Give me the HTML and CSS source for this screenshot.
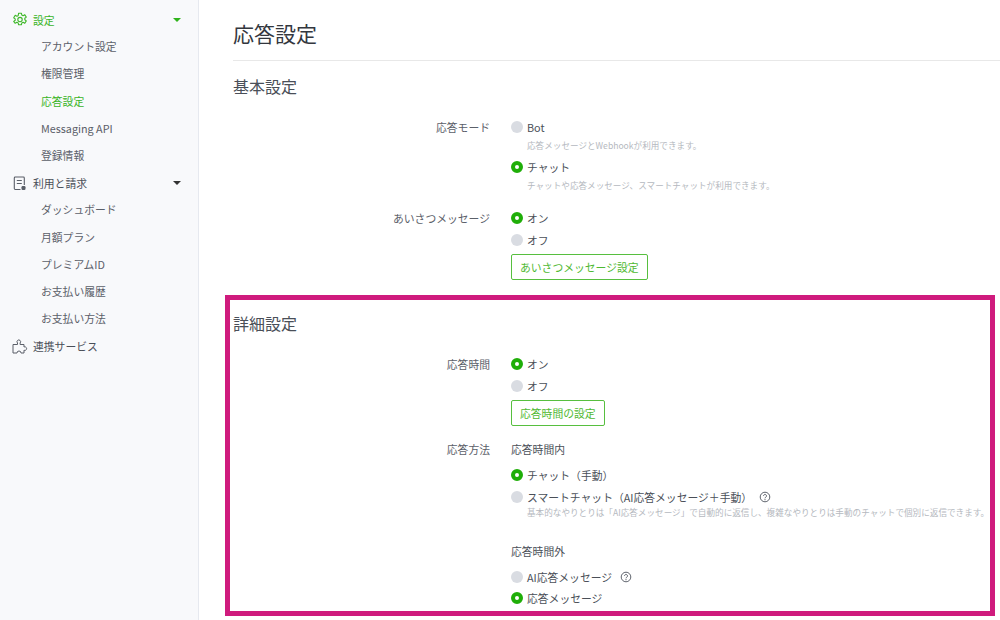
FILE: index.html
```html
<!DOCTYPE html>
<html lang="ja">

<head>
    <meta charset="UTF-8">
    <title>応答設定</title>
    <link rel="stylesheet" href="styles.css">
</head>

<body>
    <svg class="sprite" width="0" height="0">
        <symbol id="help" viewBox="0 0 12 12">
            <circle cx="6" cy="6" r="4.8" fill="none" stroke="#5f646d" stroke-width="1"></circle>
            <path d="M4.500 4.900a1.500 1.500 0 1 1 2.300 1.300c-.5.3-.8.6-.8 1.100" fill="none" stroke="#5f646d" stroke-width="1"></path>
            <circle cx="6" cy="8.700" r=".6" fill="#5f646d"></circle>
        </symbol>
    </svg>

    <div class="sidebar">
        <div class="nav-head active">
            <svg class="nav-icon" viewBox="0 0 16 16">
                <path d="M6.600 1.200h2.800l.4 1.900 1.300.6 1.700-1 1.500 2.400-1.500 1.200v1.400l1.500 1.200-1.500 2.400-1.700-1-1.300.6-.4 1.900H6.600l-.4-1.900-1.300-.6-1.700 1L1.700 9.500l1.500-1.200V6.900L1.700 5.700l1.500-2.400 1.700 1 1.300-.6z" fill="none" stroke="#3fb82a" stroke-width="1.100" stroke-linejoin="round"></path>
                <circle cx="8" cy="7.600" r="2.200" fill="none" stroke="#3fb82a" stroke-width="1.100"></circle>
            </svg>
            <span>設定</span>
            <i class="caret"></i>
        </div>
        <a class="nav-item">アカウント設定</a>
        <a class="nav-item">権限管理</a>
        <a class="nav-item active">応答設定</a>
        <a class="nav-item">Messaging API</a>
        <a class="nav-item">登録情報</a>
        <div class="nav-head">
            <svg class="nav-icon" viewBox="0 0 16 16">
                <path d="M8.500 14.500H3.200a.9.9 0 0 1-.9-.9V2.900a.9.9 0 0 1 .9-.9h8.200a.9.9 0 0 1 .9.9V10" fill="none" stroke="#5a5f68" stroke-width="1.100"></path>
                <path d="M4.800 5.500h5M4.800 8.500h5" stroke="#5a5f68" stroke-width="1.100"></path>
                <rect x="9.500" y="11" width="4" height="4" rx="1.200" fill="#5a5f68"></rect>
            </svg>
            <span>利用と請求</span>
            <i class="caret"></i>
        </div>
        <a class="nav-item">ダッシュボード</a>
        <a class="nav-item">月額プラン</a>
        <a class="nav-item">プレミアムID</a>
        <a class="nav-item">お支払い履歴</a>
        <a class="nav-item">お支払い方法</a>
        <div class="nav-head">
            <svg class="nav-icon" viewBox="0 0 16 16">
                <path d="M1 15V6.500h4.500V5a1.800 1.800 0 1 1 2.600 0v1.500H12V9a1.800 1.800 0 1 1 0 3.200V15H9a2 2 0 0 0-4 0z" fill="none" stroke="#5a5f68" stroke-width="1" stroke-linejoin="round"></path>
            </svg>
            <span>連携サービス</span>
        </div>
    </div>

    <div class="main">
        <h1>応答設定</h1>

        <h2 class="first">基本設定</h2>
        <div class="row">
            <div class="label">応答モード</div>
            <div class="value">
                <div class="radio"><i class="dot"></i>Bot</div>
                <p class="note">応答メッセージとWebhookが利用できます。</p>
                <div class="radio second"><i class="dot on"></i>チャット</div>
                <p class="note">チャットや応答メッセージ、スマートチャットが利用できます。</p>
            </div>
        </div>
        <div class="row greet-row">
            <div class="label">あいさつメッセージ</div>
            <div class="value">
                <div class="radio"><i class="dot on"></i>オン</div>
                <div class="radio"><i class="dot"></i>オフ</div>
                <a class="btn">あいさつメッセージ設定</a>
            </div>
        </div>

        <h2 class="detail">詳細設定</h2>
        <div class="row">
            <div class="label">応答時間</div>
            <div class="value">
                <div class="radio"><i class="dot on"></i>オン</div>
                <div class="radio"><i class="dot"></i>オフ</div>
                <a class="btn">応答時間の設定</a>
            </div>
        </div>
        <div class="row method-row">
            <div class="label">応答方法</div>
            <div class="value">
                <div class="sub-title">応答時間内</div>
                <div class="radio"><i class="dot on"></i>チャット（手動）</div>
                <div class="radio"><i class="dot"></i>スマートチャット（AI応答メッセージ＋手動）<svg class="help help-wide"><use href="#help"></use></svg></div>
                <p class="note tight">基本的なやりとりは「AI応答メッセージ」で自動的に返信し、複雑なやりとりは手動のチャットで個別に返信できます。</p>
                <div class="sub-title outside">応答時間外</div>
                <div class="radio"><i class="dot"></i>AI応答メッセージ<svg class="help"><use href="#help"></use></svg></div>
                <div class="radio last"><i class="dot on"></i>応答メッセージ</div>
            </div>
        </div>
    </div>

    <div class="highlight"></div>
</body>

</html>
```

FILE: styles.css
```css
body {
    font-family: "Noto Sans CJK JP", "Noto Sans", sans-serif;
    font-size: 10.8px;
    color: #4a4f58;
    background-color: #fff;
    margin: 0;
    height: 620px;
    overflow: hidden;
    display: flex;
}

.sprite {
    position: absolute;
}

.sidebar {
    width: 199px;
    height: 620px;
    flex-shrink: 0;
    box-sizing: border-box;
    padding-top: 6px;
    background-color: #f8f9fb;
    border-right: 1px solid #e6e9ef;
}

.nav-head {
    height: 27.2px;
    display: flex;
    align-items: center;
    padding-left: 12px;
    padding-right: 17px;
    color: #4a4f58;
}

.nav-head.active {
    color: #38b41f;
}

.nav-icon {
    width: 16px;
    height: 16px;
    margin-right: 5px;
}

.caret {
    margin-left: auto;
    width: 0;
    height: 0;
    border-left: 4px solid transparent;
    border-right: 4px solid transparent;
    border-top: 4px solid #333;
}

.nav-head.active .caret {
    border-top-color: #2fb31b;
}

.nav-item {
    display: block;
    height: 27.2px;
    line-height: 27.2px;
    padding-left: 41px;
    color: #5b6069;
}

.nav-item.active {
    color: #38b41f;
}

.main {
    flex: 1;
    padding-left: 34px;
}

h1 {
    margin: 0;
    height: 60px;
    line-height: 66px;
    font-size: 21px;
    font-weight: 400;
    color: #33373e;
    border-bottom: 1px solid #e8e8e8;
}

h2 {
    margin: 0;
    font-size: 16px;
    font-weight: 400;
    line-height: 24px;
    color: #4a4f58;
}

h2.first {
    margin-top: 13px;
    margin-bottom: 18px;
}

h2.detail {
    margin-top: 31px;
    margin-bottom: 18px;
}

.row {
    display: flex;
}

.greet-row {
    margin-top: 16px;
}

.method-row {
    margin-top: 12px;
}

.label {
    width: 257px;
    text-align: right;
    line-height: 22px;
    color: #5b6069;
    flex-shrink: 0;
}

.value {
    margin-left: 21px;
}

.radio {
    display: flex;
    align-items: center;
    height: 22px;
    color: #4a4f58;
    white-space: nowrap;
}

.radio.second {
    margin-top: 5px;
}

.radio.last {
    margin-top: -1px;
}

.dot {
    width: 12px;
    height: 12px;
    box-sizing: border-box;
    border-radius: 50%;
    background-color: #d9dce2;
    margin-right: 4px;
}

.dot.on {
    background-color: #fff;
    border: 4px solid #1fae08;
}

.note {
    margin: 1px 0 0;
    height: 12px;
    line-height: 12px;
    font-size: 8.6px;
    color: #b5b9c0;
    white-space: nowrap;
    padding-left: 16px;
}

.note.tight {
    margin-top: -2px;
}

.btn {
    display: inline-block;
    box-sizing: border-box;
    height: 26px;
    line-height: 24px;
    padding: 0 8px;
    margin-top: 3px;
    color: #4fb932;
    background-color: #fff;
    border: 1px solid #57bf3f;
    border-radius: 2px;
}

.sub-title {
    height: 22px;
    line-height: 22px;
    margin-bottom: 4px;
}

.sub-title.outside {
    margin-top: 22px;
    margin-bottom: 4px;
}

.help {
    width: 12px;
    height: 12px;
    margin-left: 8px;
}

.help-wide {
    margin-left: 7px;
}

/* annotation frame drawn on top of the screenshot */
.highlight {
    position: absolute;
    left: 225px;
    top: 295px;
    width: 770px;
    height: 321px;
    box-sizing: border-box;
    border: 5px solid #cf1b7d;
}
```
